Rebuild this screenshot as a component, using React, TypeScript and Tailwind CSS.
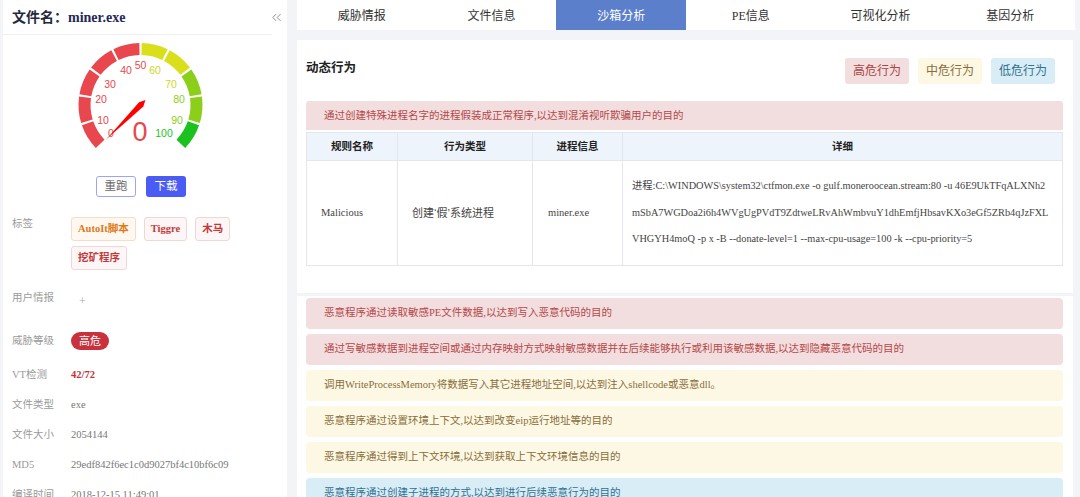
import { ChevronsLeft } from 'lucide-react';

const FONT = '"Liberation Serif", "Noto Sans CJK SC", serif';
const SANS = '"Liberation Sans", "Noto Sans CJK SC", sans-serif';

const TABS = ['威胁情报', '文件信息', '沙箱分析', 'PE信息', '可视化分析', '基因分析'];

const RED = '#e8484d';
const YELLOW = '#d9e01b';
const LIME = '#8ccf1b';
const GREEN = '#1bc21e';

const segColor = (i: number) => (i < 5 ? RED : i < 7 ? YELLOW : i < 9 ? LIME : GREEN);

// label positions measured from the gauge (svg coords)
const LABELS: { t: string; x: number; y: number; c: string }[] = [
  { t: '0', x: 108, y: 98, c: RED },
  { t: '10', x: 100, y: 85, c: RED },
  { t: '20', x: 98, y: 64, c: RED },
  { t: '30', x: 107, y: 49, c: RED },
  { t: '40', x: 123, y: 35, c: RED },
  { t: '50', x: 137.5, y: 30, c: RED },
  { t: '60', x: 152, y: 35, c: '#cfd61c' },
  { t: '70', x: 168, y: 49, c: '#cfd61c' },
  { t: '80', x: 176, y: 64, c: LIME },
  { t: '90', x: 174, y: 85, c: LIME },
  { t: '100', x: 161, y: 98, c: GREEN },
];

const ALERTS: { text: string; level: 'high' | 'mid' | 'low' }[] = [
  { text: '恶意程序通过读取敏感PE文件数据,以达到写入恶意代码的目的', level: 'high' },
  { text: '通过写敏感数据到进程空间或通过内存映射方式映射敏感数据并在后续能够执行或利用该敏感数据,以达到隐藏恶意代码的目的', level: 'high' },
  { text: '调用WriteProcessMemory将数据写入其它进程地址空间,以达到注入shellcode或恶意dll。', level: 'mid' },
  { text: '恶意程序通过设置环境上下文,以达到改变eip运行地址等的目的', level: 'mid' },
  { text: '恶意程序通过得到上下文环境,以达到获取上下文环境信息的目的', level: 'mid' },
  { text: '恶意程序通过创建子进程的方式,以达到进行后续恶意行为的目的', level: 'low' },
];

const LEVEL_CLS = {
  high: 'bg-[#f2dede] text-[#b5484a]',
  mid: 'bg-[#fcf8e3] text-[#8a6d3b]',
  low: 'bg-[#d9edf7] text-[#31708f]',
};

function Gauge() {
  const cx = 137.5;
  const cy = 70;
  const r = 56;
  const pt = (v: number, rad: number) => {
    const a = ((225 - 2.7 * v) * Math.PI) / 180;
    return [cx + rad * Math.cos(a), cy - rad * Math.sin(a)];
  };
  return (
    <svg width="284" height="136" viewBox="0 0 284 136" className="block">
      {Array.from({ length: 10 }).map((_, i) => {
        const [x1, y1] = pt(i * 10 + 0.4, r);
        const [x2, y2] = pt((i + 1) * 10 - 0.4, r);
        return (
          <path
            key={i}
            d={`M ${x1} ${y1} A ${r} ${r} 0 0 1 ${x2} ${y2}`}
            fill="none"
            stroke={segColor(i)}
            strokeWidth="12"
          />
        );
      })}
      {LABELS.map((l) => (
        <text
          key={l.t}
          x={l.x}
          y={l.y}
          fill={l.c}
          fontSize="10.5"
          textAnchor="middle"
          dominantBaseline="central"
          style={{ fontFamily: SANS }}
        >
          {l.t}
        </text>
      ))}
      <g transform={`rotate(-135 ${cx} ${cy})`}>
        <polygon
          points={`${cx},${cy - 49} ${cx + 3},${cy + 1} ${cx},${cy + 7} ${cx - 3},${cy + 1}`}
          fill="#f00"
        />
      </g>
      <text
        x="137"
        y="97"
        fill={RED}
        fontSize="27"
        textAnchor="middle"
        dominantBaseline="central"
        style={{ fontFamily: SANS }}
      >
        0
      </text>
    </svg>
  );
}

function Row({ label, children, className = 'h-[30px] items-center', labelCls = '' }: { label: string; children?: React.ReactNode; className?: string; labelCls?: string }) {
  return (
    <div className={`flex ${className}`}>
      <div className={`w-[68px] shrink-0 pl-[9px] text-[10.5px] text-[#9a9a9a] ${labelCls}`}>{label}</div>
      <div className="flex-1 text-[10.5px] text-[#777]">{children}</div>
    </div>
  );
}

const TAG_RED = 'flex h-[24px] items-center rounded-[3px] border border-[#f1d6d6] bg-[#fdf6f6] px-[6px] text-[10.5px] font-bold text-[#c23a3a]';

export default function App() {
  return (
    <div className="flex h-[497px] overflow-hidden bg-[#f3f4f7] pl-[3px]" style={{ fontFamily: FONT }}>
      {/* left panel */}
      <aside className="w-[284px] shrink-0 bg-white">
        <div className="flex h-[34px] items-center justify-between pl-[9px] pr-[3px]">
          <p className="text-[14px] font-bold text-[#1f2a3c]">
            文件名：<span className="text-[#27275a]">miner.exe</span>
          </p>
          <ChevronsLeft size={15} strokeWidth={1.5} className="text-[#888]" />
        </div>
        <div className="h-px w-[269px] bg-[#eef0f3]" />

        <Gauge />

        <div className="mt-[5px] flex justify-center gap-[10px] pr-[8px]">
          <button type="button" className="h-[21px] w-[40px] rounded-[3px] border border-[#9aa6f4] text-[11.5px] text-[#666]">
            重跑
          </button>
          <button type="button" className="h-[21px] w-[40px] rounded-[3px] bg-[#4b5cf4] text-[11.5px] text-white">
            下载
          </button>
        </div>

        <div className="mt-[16px]">
          <Row label="标签" className="items-start" labelCls="mt-[3px]">
            <div className="flex w-[175px] flex-wrap gap-x-[8px] gap-y-[5px] pt-[4px]">
              <span className="flex h-[24px] items-center rounded-[3px] border border-[#f6dccb] bg-[#fff8f1] px-[6px] text-[10.5px] font-bold text-[#e07a17]">
                AutoIt脚本
              </span>
              <span className={TAG_RED}>Tiggre</span>
              <span className={TAG_RED}>木马</span>
              <span className={TAG_RED}>挖矿程序</span>
            </div>
          </Row>
          <div className="mt-[13px]">
            <Row label="用户情报">
              <span className="inline-block pl-[8px] pt-[6px] text-[12px] text-[#aaa]">+</span>
            </Row>
          </div>
          <div className="mt-[13px]">
            <Row label="威胁等级">
              <span className="inline-flex h-[18px] items-center rounded-full bg-[#c8323c] px-[8px] text-[11px] text-white">
                高危
              </span>
            </Row>
          </div>
          <div className="mt-[4px]">
            <Row label="VT检测">
              <span className="font-bold text-[#c0333a]">42/72</span>
            </Row>
            <Row label="文件类型">exe</Row>
            <Row label="文件大小">2054144</Row>
            <Row label="MD5">29edf842f6ec1c0d9027bf4c10bf6c09</Row>
            <Row label="编译时间">2018-12-15 11:49:01</Row>
          </div>
        </div>
      </aside>

      {/* right side */}
      <main className="ml-[10px] flex w-[778px] shrink-0 flex-col">
        <div className="flex h-[30px] shrink-0 bg-white">
          {TABS.map((t, i) => (
            <div
              key={t}
              className={`flex flex-1 items-center justify-center pt-[2px] text-[12px] ${i === 2 ? 'bg-[#5b7fcb] text-white' : 'text-[#333]'}`}
            >
              {t}
            </div>
          ))}
        </div>

        <div className="mt-[10px] w-[776px] shrink-0 bg-white pb-[27px] pl-[9px] pr-[10px]">
          <div className="flex h-[44px] items-start justify-between pt-[18px]">
            <h2 className="mt-[1px] text-[12.5px] font-bold text-[#222]">动态行为</h2>
            <div className="flex gap-[9px] pr-[8px]">
              <span className="flex h-[26px] w-[64px] items-center justify-center rounded-[3px] bg-[#f2dede] text-[12px] text-[#a94442]">高危行为</span>
              <span className="flex h-[26px] w-[64px] items-center justify-center rounded-[3px] bg-[#fcf8e3] text-[12px] text-[#8a6d3b]">中危行为</span>
              <span className="flex h-[26px] w-[64px] items-center justify-center rounded-[3px] bg-[#d9edf7] text-[12px] text-[#31708f]">低危行为</span>
            </div>
          </div>
          <div className="mt-[17px] flex h-[29px] items-center rounded-t-[3px] bg-[#f2dede] pl-[18px] text-[10.5px] text-[#b5484a]">
            通过创建特殊进程名字的进程假装成正常程序,以达到混淆视听欺骗用户的目的
          </div>
          <table className="mt-[2px] w-full table-fixed border-collapse text-[10.5px]">
            <thead>
              <tr className="h-[28px] bg-[#eef4fb] text-[#222]">
                <th className="w-[91px] border border-[#e3e6ea] font-bold">规则名称</th>
                <th className="w-[135px] border border-[#e3e6ea] font-bold">行为类型</th>
                <th className="w-[90px] border border-[#e3e6ea] font-bold">进程信息</th>
                <th className="border border-[#e3e6ea] font-bold">详细</th>
              </tr>
            </thead>
            <tbody>
              <tr className="text-[#444]">
                <td className="border border-[#e3e6ea] pl-[14px]">Malicious</td>
                <td className="border border-[#e3e6ea] pl-[14px] text-[11px]" style={{ fontFamily: SANS }}>
                  创建‘假’系统进程
                </td>
                <td className="border border-[#e3e6ea] pl-[15px]">miner.exe</td>
                <td className="overflow-hidden whitespace-nowrap border border-[#e3e6ea] py-[12px] pl-[9px] text-[10.3px] leading-[26.5px]">
                  <div>进程:C:\WINDOWS\system32\ctfmon.exe -o gulf.moneroocean.stream:80 -u 46E9UkTFqALXNh2</div>
                  <div>mSbA7WGDoa2i6h4WVgUgPVdT9ZdtweLRvAhWmbvuY1dhEmfjHbsavKXo3eGf5ZRb4qJzFXL</div>
                  <div>VHGYH4moQ -p x -B --donate-level=1 --max-cpu-usage=100 -k --cpu-priority=5</div>
                </td>
              </tr>
            </tbody>
          </table>
        </div>

        <div className="mt-[3px] flex w-[776px] flex-1 flex-col gap-[5px] bg-white pl-[9px] pr-[10px] pt-[2px]">
          {ALERTS.map((a) => (
            <div
              key={a.text}
              className={`flex h-[31px] shrink-0 items-center rounded-[4px] pl-[18px] text-[10.5px] ${LEVEL_CLS[a.level]}`}
            >
              {a.text}
            </div>
          ))}
        </div>
      </main>
    </div>
  );
}
